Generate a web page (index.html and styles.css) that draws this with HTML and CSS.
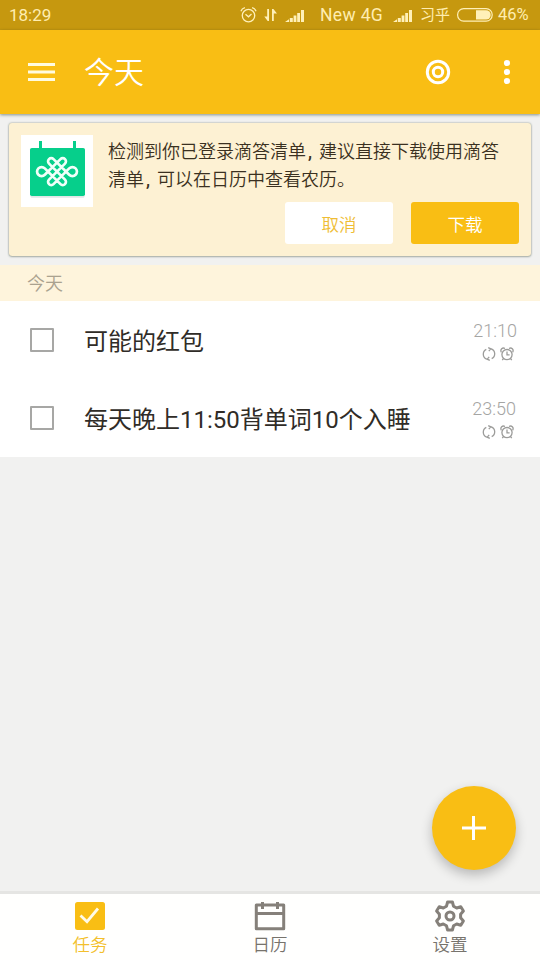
FILE: index.html
```html
<!DOCTYPE html>
<html lang="zh-CN">
<head>
<meta charset="utf-8">
<title>今天</title>
<link rel="stylesheet" href="styles.css">
</head>
<body>
<svg class="defs" width="0" height="0" aria-hidden="true">
  <symbol id="repeat" viewBox="0 0 14 14"><path d="M4.8 12.2A5.4 5.4 0 0 1 4.3 2.3M9.2 1.8A5.4 5.4 0 0 1 9.7 11.7M6.8 4.2L8.8 1.8L6.2 .6M7.2 9.8L5.2 12.2L7.8 13.4"/></symbol>
  <symbol id="alarm" viewBox="0 0 14 14"><circle cx="7" cy="7.6" r="5.1"/><path d="M7 4.6V7.8H9.6M3.4 11.6L2.3 13.2M10.6 11.6L11.7 13.2M1.3 5.2C-.1 2.5 2.5.1 5 1.5M12.7 5.2C14.1 2.5 11.5.1 9 1.5"/></symbol>
  <symbol id="signal" viewBox="0 0 20 13"><path d="M0 13L4 10.2V13ZM4.8 9H7.8V13H4.8ZM8.6 6.5H11.4V13H8.6ZM12.2 4H15V13H12.2ZM16 1H19V13H16Z"/></symbol>
</svg>
<div class="screen">
  <div class="status">
    <span class="clock">18:29</span>
    <svg class="s-alarm" viewBox="0 0 18 18"><circle cx="9" cy="9.6" r="6.6"/><path d="M5.8 8.2L9 10.9L12.2 8M1 5Q2 2 5.2 1.2M17 5Q16 2 12.8 1.2"/></svg>
    <svg class="s-data" viewBox="0 0 14 14"><path d="M5 1V13H3.7L.3 8.6H3.2V1ZM8 13V1H9.4L13 5.4H9.8V13Z"/></svg>
    <svg class="s-signal"><use href="#signal"/></svg>
    <span class="net">New 4G</span>
    <svg class="s-signal second"><use href="#signal"/></svg>
    <span class="carrier">习乎</span>
    <svg class="battery" viewBox="0 0 36 14"><rect x=".6" y=".6" width="34.6" height="12.6" rx="6.1"/><path class="fill" d="M19 2.2H29A4.6 4.6 0 0 1 29 11.6H19Z"/></svg>
    <span class="percent">46%</span>
  </div>

  <header class="appbar">
    <svg class="menu" viewBox="0 0 28 20"><path d="M0 2.2H28M0 10H28M0 17.8H28"/></svg>
    <h1>今天</h1>
    <svg class="target" viewBox="0 0 26 26"><circle cx="13" cy="13" r="10.7"/><circle cx="13" cy="13" r="4.7"/></svg>
    <svg class="more" viewBox="0 0 8 26"><circle cx="4" cy="4" r="3.1"/><circle cx="4" cy="13" r="3.1"/><circle cx="4" cy="22" r="3.1"/></svg>
  </header>

  <section class="card">
    <svg class="logo" viewBox="0 0 72 72">
      <path class="white" d="M0 0H72V72H0Z"/>
      <rect class="shade" x="9.5" y="14" width="54" height="48.8" rx="1.5"/>
      <rect class="green" x="9" y="13" width="55" height="48" rx="1.8"/>
      <path class="green" d="M18 6H21V13H18ZM52 6H55V13H52Z"/>
      <path class="knot" transform="translate(36 36.6)" d="M-12.2 -3.2L-3.2 5.8M-8 -8L8 8M-3.5 -12.5L12.2 3.2M-12.2 3.2L3.5 -12.5M-8 8L8 -8M-3.5 12.5L12.2 -3.2M-12.2 -3.2L3.5 12.5M-8 -8A3.18 3.18 0 0 1 -3.5 -12.5M8 -8A3.18 3.18 0 0 0 3.5 -12.5M-8 8A3.18 3.18 0 0 0 -3.5 12.5M8 8A3.18 3.18 0 0 1 3.5 12.5M-12.2 -3.2A4.53 4.53 0 1 0 -12.2 3.2M12.2 -3.2A4.53 4.53 0 1 1 12.2 3.2"/>
    </svg>
    <div class="card-body">
      <p>检测到你已登录滴答清单<span class="comma">,</span>建议直接下载使用滴答<br>清单<span class="comma">,</span>可以在日历中查看农历。</p>
      <div class="actions">
        <button class="cancel">取消</button>
        <button class="download">下载</button>
      </div>
    </div>
  </section>

  <h2 class="group">今天</h2>
  <ul class="tasks">
    <li>
      <span class="box"></span>
      <span class="name">可能的红包</span>
      <div class="meta"><time>21:10</time><div class="marks"><svg><use href="#repeat"/></svg><svg><use href="#alarm"/></svg></div></div>
    </li>
    <li>
      <span class="box"></span>
      <span class="name">每天晚上11:50背单词10个入睡</span>
      <div class="meta late"><time>23:50</time><div class="marks"><svg><use href="#repeat"/></svg><svg><use href="#alarm"/></svg></div></div>
    </li>
  </ul>

  <button class="fab" aria-label="添加"><svg viewBox="0 0 24 24"><path d="M11.5 0V24M0 12H24"/></svg></button>

  <nav class="tabs">
    <a class="tab active">
      <svg viewBox="0 0 32 32"><rect class="solid" x="1" y="2" width="30" height="28" rx="2.5"/><path class="check" d="M6.5 15.5L13 21.7L24 8.5"/></svg>
      <span>任务</span>
    </a>
    <a class="tab">
      <svg viewBox="0 0 32 32"><path d="M2.3 5H29.7V28.7H2.3ZM2.3 13.5H29.7M8.5 2V9M23.5 2V9"/></svg>
      <span>日历</span>
    </a>
    <a class="tab">
      <svg viewBox="0 0 32 32"><path d="M13.6 2H18.4L19.5 6.2L22.7 8L26.8 6.8L29.4 11L26.6 14.2V17.8L29.4 21L26.8 25.2L22.7 24L19.5 25.8L18.4 30H13.6L12.5 25.8L9.3 24L5.2 25.2L2.6 21L5.4 17.8V14.2L2.6 11L5.2 6.8L9.3 8L12.5 6.2Z"/><circle cx="16" cy="16" r="4"/></svg>
      <span>设置</span>
    </a>
  </nav>
</div>
</body>
</html>
```
FILE: styles.css
```css
* { box-sizing: border-box; }
body { margin: 0; font-family: Roboto, "Noto Sans CJK SC", sans-serif; }
svg { display: block; flex: none; fill: none; }
h1, h2, p, ul { margin: 0; padding: 0; font-weight: 350; }
button { border: 0; padding: 0; font: inherit; }
.defs { position: absolute; }
.screen { position: relative; display: flex; flex-direction: column; width: 540px; height: 960px; background: #f1f1f0; overflow: hidden; }

.status { display: flex; align-items: center; height: 30px; padding-left: 9px; background: #c6980f; color: #ffedb0; font-size: 17px; line-height: 32px; white-space: nowrap; }
.clock { width: 231px; font-size: 17px; }
.s-alarm { width: 17px; height: 18px; stroke: #fff0b8; stroke-width: 1.4; }
.s-data { width: 14px; height: 14px; margin-left: 7px; fill: #fff0b8; }
.s-signal { width: 20px; height: 13px; margin-left: 7px; fill: #fff0b8; }
.net { width: 66px; margin-left: 15px; font-size: 17.5px; letter-spacing: .35px; }
.s-signal.second { margin-left: 7px; }
.carrier { width: 31px; margin-left: 7px; font-size: 15px; }
.battery { width: 36px; height: 14px; margin-left: 6px; stroke: #fff0b8; stroke-width: 1.2; }
.battery .fill { fill: #fff0b8; stroke: none; }
.percent { margin-left: 5px; font-size: 16.5px; }

.appbar { position: relative; display: flex; align-items: center; flex: none; height: 84px; padding: 0 29px 0 28px; background: #f9be14; color: #fff; box-shadow: 0 1px 3px rgba(0, 30, 20, .45); }
.menu { width: 27px; height: 20px; stroke: #fffbe0; stroke-width: 3; }
.appbar h1 { flex: 1; margin-left: 29px; padding-top: 2px; font-size: 30px; line-height: 44px; }
.target { width: 26px; height: 26px; stroke: #fff; stroke-width: 3; }
.more { width: 8px; height: 26px; margin-left: 52px; fill: #fff; }

.card { display: flex; flex: none; height: 133px; margin: 9px 9px 0; padding: 12px 12px 0; background: #fdf1d3; border-radius: 3px; box-shadow: 0 0 2px rgba(40, 60, 40, .5), 0 1px 2px rgba(40, 60, 40, .25); }
.logo { width: 72px; height: 72px; }
.white { fill: #fff; }
.shade { fill: #dfe7e6; }
.green { fill: #06cf8b; }
.knot { stroke: #f1fff9; stroke-width: 2.7; }
.card-body { flex: 1; margin-left: 15px; }
.card p { padding-top: 3px; font-size: 18px; line-height: 28px; color: #3a3020; white-space: nowrap; }
.comma { display: inline-block; width: 13px; padding-left: 2px; font-weight: 500; }
.actions { display: flex; justify-content: flex-end; gap: 18px; margin-top: 8px; }
.actions button { width: 108px; height: 42px; border-radius: 3px; font-size: 17.5px; font-weight: 350; }
.cancel { background: #fff; color: #efbd35; }
.download { background: #f9be14; color: #fff; }

.group { height: 36px; margin-top: 9px; padding-left: 27px; background: #fef4dc; color: #aaa28f; font-size: 18px; line-height: 38px; }
.tasks { list-style: none; background: #fff; }
.tasks li { display: flex; align-items: center; height: 78px; padding: 0 23px 0 30px; }
.box { width: 24px; height: 24px; border: 2px solid #a7a7a5; border-radius: 1px; }
.name { flex: 1; margin-left: 30px; padding-bottom: 2px; font-size: 24px; font-weight: 400; color: #302c27; }
.meta { display: flex; flex-direction: column; align-items: flex-end; color: #a5a5a3; }
.meta time { font-size: 18px; line-height: 22px; }
.late time { margin-right: 1px; }
.marks { display: flex; gap: 4px; margin: 5px 3px 0 0; }
.marks svg { width: 14px; height: 14px; stroke: #9c9c9a; stroke-width: 1.3; }

.fab { position: absolute; left: 432px; top: 786px; display: grid; place-items: center; width: 84px; height: 84px; border-radius: 50%; background: #f9be14; box-shadow: 0 5px 12px rgba(0, 0, 0, .24); }
.fab svg { width: 24px; height: 24px; stroke: #fff; stroke-width: 3; }

.tabs { display: flex; height: 69px; margin-top: auto; border-top: 3px solid #e5e5e3; background: #fffffe; }
.tab { display: flex; flex: 1; flex-direction: column; align-items: center; padding-top: 6px; color: #77736c; font-size: 17.5px; font-weight: 350; }
.tab svg { width: 32px; height: 32px; stroke: #85807a; stroke-width: 3; stroke-linejoin: round; }
.tab span { line-height: 26px; }
.active { color: #f3bf2c; }
.tab .solid { fill: #f9be14; stroke: none; }
.tab .check { stroke: #fffbe8; stroke-width: 2.8; stroke-linejoin: miter; }
```
